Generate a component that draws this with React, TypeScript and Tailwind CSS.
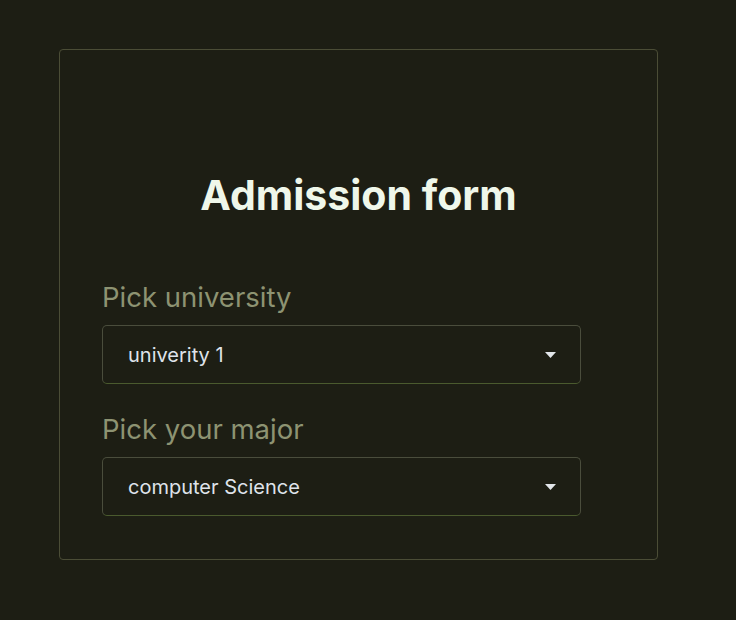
import React from "react";

function Caret() {
  return (
    <svg width="11" height="6" viewBox="0 0 11 6" className="shrink-0">
      <path d="M0 0 L11 0 L5.5 6 Z" fill="#e2e6ea" />
    </svg>
  );
}

function SelectBox({ value }: { value: string }) {
  return (
    <div className="flex h-[59px] w-[479px] items-center justify-between rounded-[5px] border border-[#4a4d3c] border-b-[#4a5a2e] pl-[25px] pr-[24px]">
      <span className="text-[20px] leading-[26px] text-[#dfe3ea]">{value}</span>
      <Caret />
    </div>
  );
}

export default function App() {
  return (
    <div
      className="min-h-[620px] w-full bg-[#1d1e14] pl-[59px] pt-[49px]"
      style={{ fontFamily: "Inter, 'Liberation Sans', sans-serif" }}
    >
      <div className="flex h-[511px] w-[599px] flex-col rounded-[4px] border border-[#4b4d36] pl-[42px] pt-[121px]">
        <h1 className="mb-[62px] -ml-[42px] text-center text-[41px] font-bold leading-[48px] text-[#eff7ea]">
          Admission form
        </h1>
        <label className="mb-[12px] text-[27.5px] leading-[32px] text-[#8d9372]">Pick university</label>
        <SelectBox value="univerity 1" />
        <label className="mb-[12px] mt-[29px] text-[27.5px] leading-[32px] text-[#8d9372]">Pick your major</label>
        <SelectBox value="computer Science" />
      </div>
    </div>
  );
}
